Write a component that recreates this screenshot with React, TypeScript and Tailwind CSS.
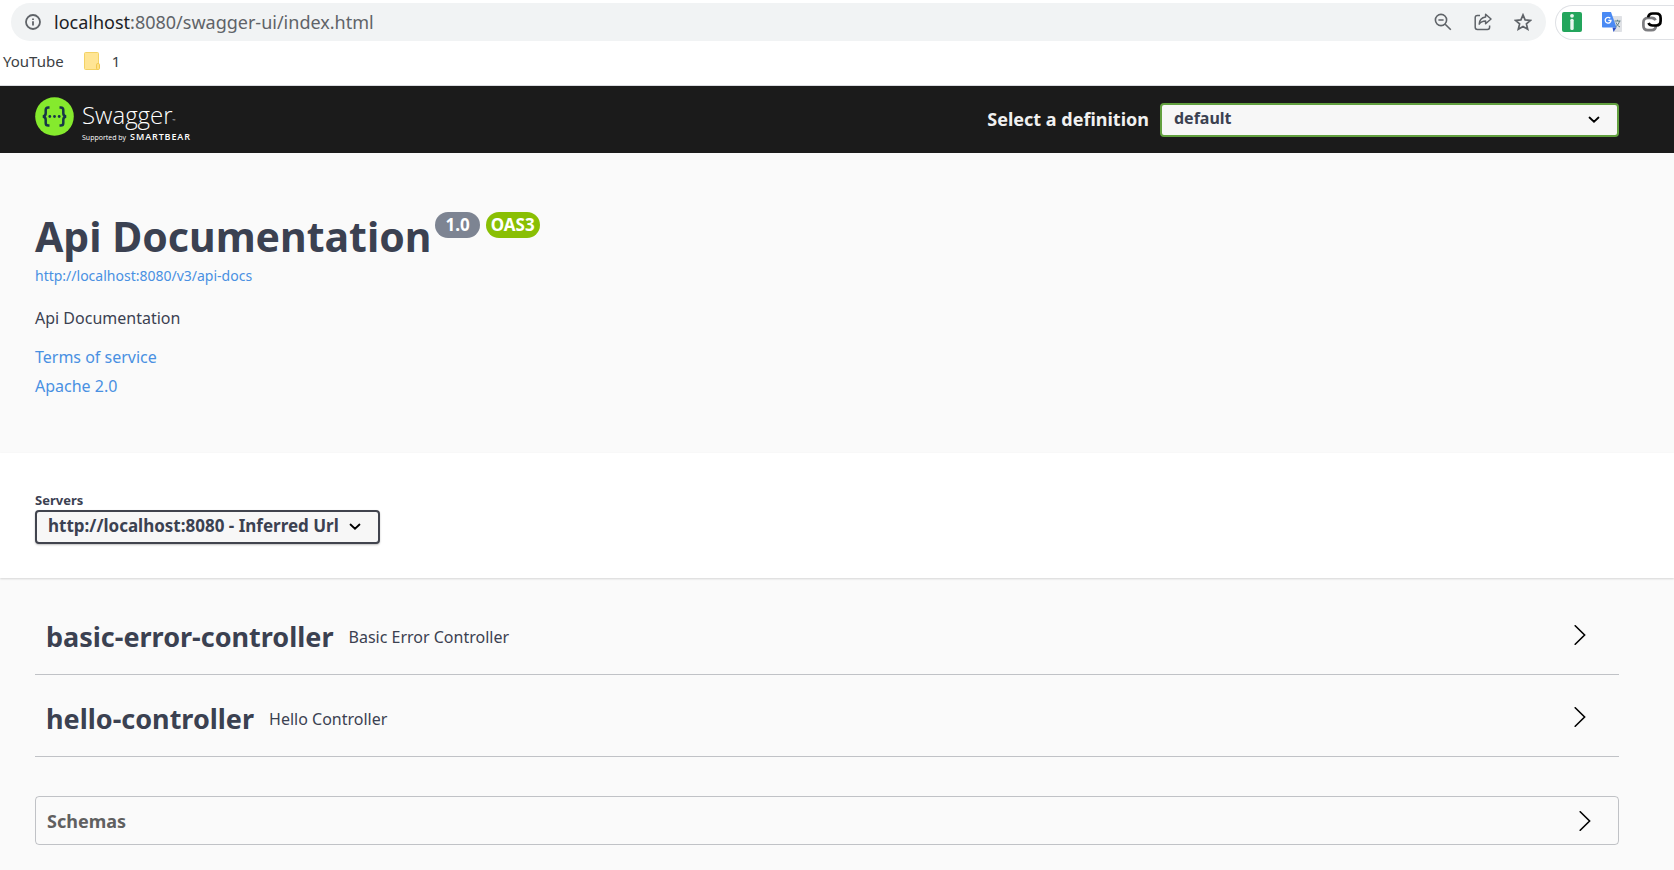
import type { ReactNode } from "react";

function ZoomOutIcon() {
  return (
    <svg viewBox="0 0 18 18" className="size-[18px]" fill="none" stroke="#5f6368" strokeWidth="1.6">
      <circle cx="7" cy="7" r="5.6" />
      <path d="M4.4 7h5.2M11.2 11.2l5.6 5.6" />
    </svg>
  );
}

function ShareIcon() {
  return (
    <svg viewBox="0 0 18 18" className="size-[18px]" fill="none" stroke="#5f6368" strokeWidth="1.5" strokeLinejoin="round">
      <path d="M6 2.4H3.4C2 2.4 1.2 3.2 1.2 4.6v9.6c0 1.4.8 2.2 2.2 2.2h10c1.4 0 2.2-.8 2.2-2.2v-1.6" />
      <path d="M11.6 1.2 17 6l-5.4 4.8V8C8.6 8 6.6 9 5.2 11.2 5.4 7.2 7.6 4.5 11.6 4z" />
    </svg>
  );
}

function StarIcon() {
  return (
    <svg viewBox="0 0 18 18" className="size-[18px]" fill="none" stroke="#5f6368" strokeWidth="1.7">
      <path d="M9 1.9l2.1 5 5.4.5-4.1 3.5 1.3 5.3L9 13.4l-4.7 2.8 1.3-5.3L1.5 7.4l5.4-.5z" />
    </svg>
  );
}

function InfoIcon() {
  return (
    <svg viewBox="0 0 16 16" className="size-4" fill="none" stroke="#5f6368" strokeWidth="1.8">
      <circle cx="8" cy="8" r="7" />
      <path d="M8 7.2v4.4M8 4.4v1.6" />
    </svg>
  );
}

function GreenInfoIcon() {
  return (
    <svg viewBox="0 0 20 20" className="size-5">
      <rect width="20" height="20" rx="2" fill="#23a55c" />
      <circle cx="10" cy="3.8" r="1.9" fill="#e9f7ef" />
      <rect x="8.3" y="6.8" width="3.4" height="11.2" rx="1.5" fill="#e9f7ef" />
    </svg>
  );
}

function TranslateIcon() {
  return (
    <svg viewBox="0 0 20 20" className="size-5">
      <path d="M8 4h11c.6 0 1 .4 1 1v14c0 .6-.4 1-1 1h-7z" fill="#dfe1e5" />
      <path d="M10.5 15.5h4L11.5 20z" fill="#2a4fc4" />
      <path d="M1 0h8l5.5 15.5H1c-.6 0-1-.4-1-1V1c0-.6.4-1 1-1z" fill="#4a8af4" />
      <path d="M8.3 6.3A2.9 2.9 0 1 0 9 8.4H6.3" fill="none" stroke="#fff" strokeWidth="1.3" />
      <path d="M12.5 9h6M15.5 7.800V9M17.5 9c-.5 2.5-2 4.5-4 6M14 10.5c.8 2 2 3.5 4 4.5" fill="none" stroke="#5c7f86" strokeWidth="1" />
    </svg>
  );
}

function LinkRingsIcon() {
  return (
    <svg viewBox="0 0 20 20" className="size-5" fill="none" strokeWidth="2.7">
      <path d="M13.900 12.500v1.200c0 2.700-1.700 4.400-4.400 4.400H5.800c-2.700 0-4.400-1.700-4.400-4.400v-3.400c0-2.700 1.700-4.400 4.400-4.400h3.700c2 0 3.400.9 4 2.400" stroke="#7d7d80" />
      <path d="M6.200 5.400c.3-2.400 2-3.900 4.400-3.900h3.600c2.700 0 4.400 1.700 4.400 4.400v3.200c0 2.700-1.700 4.400-4.400 4.400h-3.600c-2 0-3.400-.9-4.100-2.500" stroke="#000" />
    </svg>
  );
}

function FolderIcon() {
  return (
    <svg viewBox="0 0 16 18" className="h-[18px] w-4">
      <rect x=".5" y=".5" width="14" height="17" rx="1" fill="#ffe594" stroke="#f3d266" />
      <rect x="12.5" y="11.5" width="3" height="6" rx="1.2" fill="#ffe082" stroke="#f0c850" />
    </svg>
  );
}

function SwaggerLogo() {
  return (
    <a href="#top" aria-label="Swagger" className="flex items-start gap-2 pb-1 text-white">
      <svg viewBox="0 0 39 39" className="mt-1 size-[39px]">
        <circle cx="19.5" cy="19.5" r="19.3" fill="#85ea2d" />
        <g fill="none" stroke="#173647" strokeWidth="2.5">
          <path d="M14.5 10.5h-1.200c-1.700 0-2.600.9-2.600 2.600v3.200c0 1.900-.9 2.900-2.800 3.200 1.900.3 2.800 1.300 2.800 3.200v3.200c0 1.700.9 2.600 2.600 2.600h1.200" />
          <path d="M24.500 10.500h1.200c1.700 0 2.600.9 2.600 2.600v3.200c0 1.900.9 2.900 2.800 3.200-1.900.3-2.800 1.300-2.800 3.200v3.200c0 1.700-.9 2.600-2.600 2.600h-1.200" />
        </g>
        <g fill="#173647">
          <circle cx="14.8" cy="19.5" r="1.4" />
          <circle cx="19.5" cy="19.5" r="1.4" />
          <circle cx="24.2" cy="19.5" r="1.4" />
        </g>
      </svg>
      <span className="flex flex-col pt-1 font-['Open_Sans',sans-serif]">
        <span className="flex items-end text-2xl leading-9 font-light">
          Swagger<span className="text-[4px] leading-6">™</span>
        </span>
        <span className="flex items-baseline gap-1 text-[7px] leading-2">
          Supported by
          <span className="text-[9px] font-semibold tracking-widest">SMARTBEAR</span>
        </span>
      </span>
    </a>
  );
}

function SmallChevron() {
  return (
    <svg viewBox="0 0 12 8" className="pointer-events-none absolute inset-y-0 right-[19px] my-auto h-2 w-3" fill="none" stroke="#000" strokeWidth="1.8" strokeLinecap="round">
      <path d="M1.5 1.5 6 5.7 10.5 1.5" />
    </svg>
  );
}

function RightChevron() {
  return (
    <svg viewBox="0 0 12 20" className="h-5 w-3" fill="none" stroke="#000" strokeWidth="1.6" strokeLinecap="round">
      <path d="M1.2 .8 10.6 10 1.2 19.2" />
    </svg>
  );
}

function Tag({ name, children }: { name: string; children: ReactNode }) {
  return (
    <section className="border-b border-[#3b4151]/30">
      <button type="button" className="flex h-[81px] w-full items-center pt-[3px] pr-[33px] pl-[11px] text-left">
        <h3 className="pt-1 text-[27px] leading-9 font-bold">{name}</h3>
        <span className="pt-1 pl-[15px] text-base">{children}</span>
        <span className="ml-auto">
          <RightChevron />
        </span>
      </button>
    </section>
  );
}

export default function App() {
  return (
    <div id="top" className="min-h-screen bg-[#fafafa] font-['Noto_Sans',sans-serif] text-[#3b4151]">
      <div className="border-b border-[#dadce0] bg-white">
        <div className="flex items-center gap-[9px] pt-[3px] pl-[11px]">
          <div className="flex h-[38px] flex-1 items-center rounded-full bg-[#f1f3f4] px-[14px]">
            <button type="button" aria-label="Site information">
              <InfoIcon />
            </button>
            <div className="ml-[13px] flex-1 text-lg text-[#5f6368]">
              <span className="text-[#202124]">localhost</span>:8080/swagger-ui/index.html
            </div>
            <div className="flex gap-[22px]">
              <button type="button" aria-label="Zoom"><ZoomOutIcon /></button>
              <button type="button" aria-label="Share"><ShareIcon /></button>
              <button type="button" aria-label="Bookmark"><StarIcon /></button>
            </div>
          </div>
          <div className="flex h-[35px] items-center gap-5 rounded-l-full border border-r-0 border-[#dfe1e5] pr-3 pl-[6px]">
            <button type="button" aria-label="Information extension"><GreenInfoIcon /></button>
            <button type="button" aria-label="Translate extension"><TranslateIcon /></button>
            <button type="button" aria-label="Links extension"><LinkRingsIcon /></button>
          </div>
        </div>
        <div className="flex h-11 items-center pb-1 pl-[3px] text-[15px] text-[#3c4043]">
          <a href="#youtube">YouTube</a>
          <a href="#folder" className="ml-5 flex items-center gap-3">
            <FolderIcon />1
          </a>
        </div>
      </div>

      <header className="flex h-[67px] items-center justify-between bg-[#1b1b1b] pr-[55px] pl-[35px]">
        <SwaggerLogo />
        <div className="flex items-center gap-[11px]">
          <label htmlFor="definition" className="pb-[2px] text-lg font-bold text-[#f0f0f0]">Select a definition</label>
          <div className="relative">
            <select id="definition" className="block h-[34px] w-[459px] appearance-none rounded border-2 border-[#62a03f] bg-[#f7f7f7] pb-1 pl-3 text-base font-bold">
              <option>default</option>
            </select>
            <SmallChevron />
          </div>
        </div>
      </header>

      <div className="h-[300px] pt-[57px] pr-[55px] pl-[35px]">
        <div className="flex items-start">
          <h1 className="pb-[2px] text-[41px] leading-[52px] font-bold">Api Documentation</h1>
          <span className="mt-[2px] ml-1 flex gap-[6px] text-[17px] leading-[26px] font-bold text-white">
            <span className="rounded-full bg-[#7d8492] px-[10px]">1.0</span>
            <span className="rounded-full bg-[#89bf04] px-[5px]">OAS3</span>
          </span>
        </div>
        <a href="#api-docs" className="mt-[2px] block text-sm text-[#4990e2]">http://localhost:8080/v3/api-docs</a>
        <p className="mt-5 text-base">Api Documentation</p>
        <div className="mt-[15px] flex flex-col items-start gap-[5px] text-base text-[#4990e2]">
          <a href="#terms">Terms of service</a>
          <a href="#license">Apache 2.0</a>
        </div>
      </div>

      <div className="flex h-[125px] flex-col items-start bg-white pt-[37px] pl-[35px] shadow-[0_1px_2px_0_rgba(0,0,0,0.15)]">
        <label htmlFor="server" className="text-[13px] leading-5 font-bold">Servers</label>
        <div className="relative">
          <select id="server" className="block h-[34px] w-[345px] appearance-none rounded border-2 border-[#41444e] bg-[#f7f7f7] pb-[2px] pl-[11px] text-[17px] font-bold shadow-[0_1px_2px_0_rgba(0,0,0,0.25)]">
            <option>http://localhost:8080 - Inferred Url</option>
          </select>
          <SmallChevron />
        </div>
      </div>

      <main className="pt-[15px] pr-[55px] pb-6 pl-[35px]">
        <Tag name="basic-error-controller">Basic Error Controller</Tag>
        <Tag name="hello-controller">Hello Controller</Tag>
        <section className="mt-[39px] rounded border border-[#3b4151]/30">
          <button type="button" className="flex h-[47px] w-full items-center justify-between pr-[27px] pl-[11px] text-left">
            <h4 className="text-lg font-bold text-[#606060]">Schemas</h4>
            <RightChevron />
          </button>
        </section>
      </main>
    </div>
  );
}
